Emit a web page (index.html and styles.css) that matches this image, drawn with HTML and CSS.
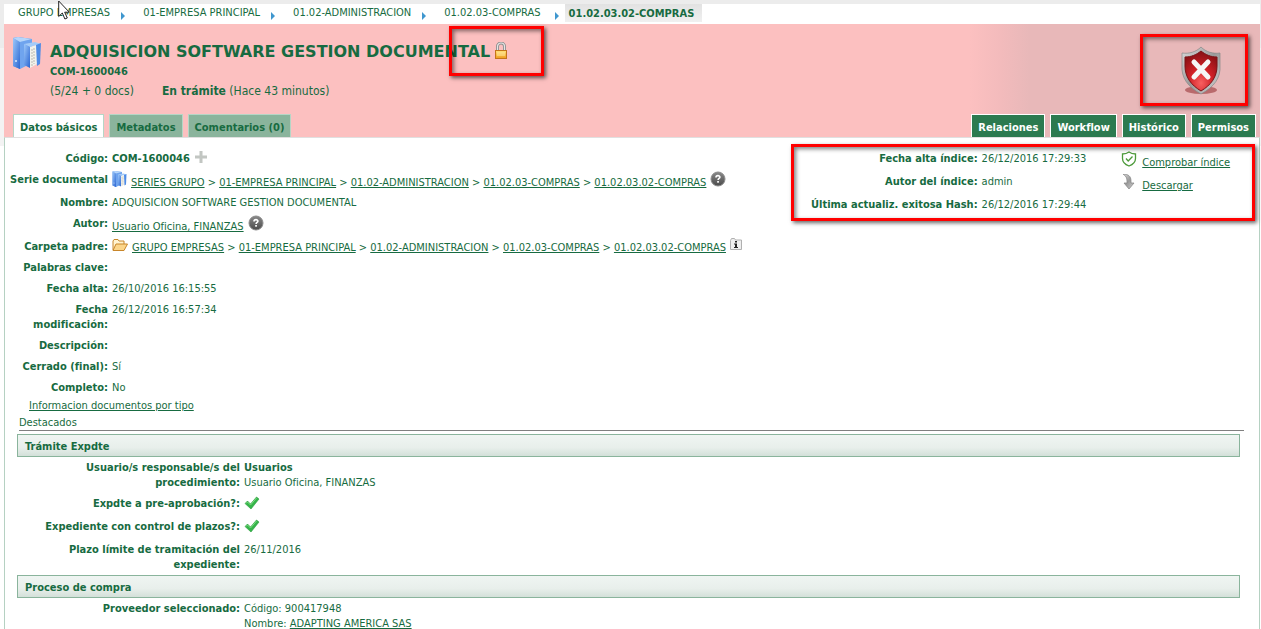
FILE: index.html
```html
<!DOCTYPE html>
<html lang="es">
<head>
    <meta charset="UTF-8">
    <meta name="viewport" content="width=device-width, initial-scale=1.0">
    <title>COM-1600046 - Adquisicion software gestion documental</title>
    <link rel="stylesheet" href="styles.css">
</head>
<body>

    <!-- Shared icons -->
    <svg class="icon-defs" width="0" height="0" aria-hidden="true">
        <defs>
            <linearGradient id="blue" x1="0" y1="0" x2="1" y2="1">
                <stop offset="0" stop-color="#9cc8fa"/>
                <stop offset="1" stop-color="#2b66d2"/>
            </linearGradient>
            <linearGradient id="gold" x1="0" y1="0" x2="0" y2="1">
                <stop offset="0" stop-color="#ffe27a"/>
                <stop offset="1" stop-color="#f09a1c"/>
            </linearGradient>
            <linearGradient id="grey" x1="0" y1="0" x2="0" y2="1">
                <stop offset="0" stop-color="#8a8a8a"/>
                <stop offset="1" stop-color="#4a4a4a"/>
            </linearGradient>
            <linearGradient id="silver" x1="0" y1="0" x2="1" y2="1">
                <stop offset="0" stop-color="#dcdcdc"/>
                <stop offset="0.5" stop-color="#9a9a9a"/>
                <stop offset="1" stop-color="#d4d4d4"/>
            </linearGradient>
            <radialGradient id="red" cx="0.5" cy="0.8" r="0.75">
                <stop offset="0" stop-color="#f86060"/>
                <stop offset="0.5" stop-color="#cf2026"/>
                <stop offset="1" stop-color="#8e1216"/>
            </radialGradient>
        </defs>
        <symbol id="binders" viewBox="0 0 28 32">
            <path d="M0 1 5 0 19 2v7L7 32 0 29z" fill="#5b93e6"/>
            <path d="M0 1 7 5v27l-7-3z" fill="url(#blue)"/>
            <path d="M7 5 19 2v24L7 32z" fill="#6fa4ee"/>
            <path d="M0 1 5 0 19 2 7 5z" fill="#b5d6fb"/>
            <path d="M11 7 22 5l6 2-11 3z" fill="#a5cbf8"/>
            <path d="M11 7l6 3v21l-6-3z" fill="url(#blue)"/>
            <path d="M17 10 24 8v19l-7 4z" fill="#f2f2ec"/>
            <path d="M19 12v17M21 11v16" stroke="#b9b9b0" stroke-dasharray="2 1" fill="none"/>
            <path d="M23 8 28 6l-1 21-3 2z" fill="#4d8be6"/>
            <circle cx="3" cy="24" r="1" fill="#d8eaff"/>
        </symbol>
        <symbol id="help" viewBox="0 0 16 16">
            <circle cx="8" cy="8" r="7" fill="url(#grey)" stroke="#8c8c8c"/>
            <path d="M6 6.500c0-2.500 4-2.400 3.900-.2-.1 1.200-1.800 1.200-1.800 2.600" fill="none" stroke="#fff" stroke-width="1.600"/>
            <rect x="7.200" y="10" width="1.700" height="1.700" fill="#fff"/>
        </symbol>
        <symbol id="check" viewBox="0 0 16 14">
            <path d="M1 7.500 3.500 5l3 3L12.500 1l2.500 2L7 13z" fill="#35b54a" stroke="#2a9a3c" stroke-width="0.600"/>
            <path d="M2 7.500 3.500 6l3 3 6-7" fill="none" stroke="#7bdc7f"/>
        </symbol>
    </svg>

    <div class="page">
        <nav class="breadcrumb">
            <a href="#">GRUPO EMPRESAS</a>
            <a href="#">01-EMPRESA PRINCIPAL</a>
            <a href="#">01.02-ADMINISTRACION</a>
            <a href="#">01.02.03-COMPRAS</a>
            <a href="#" class="current">01.02.03.02-COMPRAS</a>
        </nav>

        <header class="header">
            <div class="header-main">
                <svg class="header-icon" width="28" height="32"><use href="#binders"/></svg>
                <div class="header-text">
                    <h1 class="title">ADQUISICION SOFTWARE GESTION DOCUMENTAL
                        <span class="lock">
                            <svg width="14" height="18" viewBox="0 0 14 18">
                                <path d="M3.500 9V4.500a3.500 3.500 0 0 1 7 0V9" fill="none" stroke="#8d8d8d" stroke-width="3"/>
                                <path d="M3.500 9V4.500a3.500 3.500 0 0 1 7 0V9" fill="none" stroke="#e6e6e6" stroke-width="1.200"/>
                                <rect x="1.500" y="8.500" width="11" height="8" fill="url(#gold)" stroke="#c4741a"/>
                                <path d="M3 11h8M3 13h8" stroke="#ffe9a0"/>
                            </svg>
                            <span class="highlight highlight-lock"></span>
                        </span>
                    </h1>
                    <div class="code">COM-1600046</div>
                    <div class="status"><span>(5/24 + 0 docs)</span><span><b>En trámite</b> (Hace 43 minutos)</span></div>
                </div>
                <div class="integrity">
                    <svg width="44" height="50" viewBox="0 0 44 50">
                        <ellipse cx="22" cy="44" rx="16" ry="4" fill="#b96a6c"/>
                        <path d="M22 1C17 6 10 8 3 7c0 3 0 6 0 12-1 13 6 22 19 29 13-7 20-16 19-29V7C34 8 27 6 22 1z" fill="url(#silver)" stroke="#868686" stroke-width="0.700"/>
                        <path d="M22 5c-5 4-10 6-16 6v9c0 11 6 19 16 25 10-6 16-14 16-25v-9c-6 0-11-2-16-6z" fill="url(#red)" stroke="#7c1216"/>
                        <path d="M15 16l14 15M29 16 15 31" stroke="#f6f6f6" stroke-width="5" stroke-linecap="round"/>
                    </svg>
                    <span class="highlight"></span>
                </div>
            </div>
            <nav class="tabs">
                <a href="#" class="tab active">Datos básicos</a>
                <a href="#" class="tab">Metadatos</a>
                <a href="#" class="tab">Comentarios (0)</a>
                <a href="#" class="tab action first-action">Relaciones</a>
                <a href="#" class="tab action">Workflow</a>
                <a href="#" class="tab action">Histórico</a>
                <a href="#" class="tab action">Permisos</a>
            </nav>
        </header>

        <main class="content">
            <div class="columns">
                <dl class="fields">
                    <div class="field">
                        <dt>Código:</dt>
                        <dd><b>COM-1600046</b>
                            <svg class="icon plus" width="12" height="12" viewBox="0 0 12 12"><path d="M6 0v12M0 6h12" stroke="#c2c6c2" stroke-width="3"/></svg>
                        </dd>
                    </div>
                    <div class="field with-icon">
                        <dt>Serie documental</dt>
                        <dd class="path">
                            <svg class="icon" width="15" height="16"><use href="#binders"/></svg>
                            <span><a href="#">SERIES GRUPO</a> &gt; <a href="#">01-EMPRESA PRINCIPAL</a> &gt; <a href="#">01.02-ADMINISTRACION</a> &gt; <a href="#">01.02.03-COMPRAS</a> &gt; <a href="#">01.02.03.02-COMPRAS</a></span>
                            <svg class="icon" width="16" height="16"><use href="#help"/></svg>
                        </dd>
                    </div>
                    <div class="field">
                        <dt>Nombre:</dt>
                        <dd>ADQUISICION SOFTWARE GESTION DOCUMENTAL</dd>
                    </div>
                    <div class="field with-icon">
                        <dt>Autor:</dt>
                        <dd class="path">
                            <span><a href="#">Usuario Oficina, FINANZAS</a></span>
                            <svg class="icon" width="16" height="16"><use href="#help"/></svg>
                        </dd>
                    </div>
                    <div class="field">
                        <dt>Carpeta padre:</dt>
                        <dd class="path folder-path">
                            <svg class="icon" width="16" height="14" viewBox="0 0 16 14">
                                <path d="M1 12V3l1-1.500h4L7 3h5v3" fill="#fff3d0" stroke="#c8862a"/>
                                <path d="M1 12.500 4 6h11.500L12 12.500z" fill="#fbd58a" stroke="#c8862a"/>
                            </svg>
                            <span><a href="#">GRUPO EMPRESAS</a> &gt; <a href="#">01-EMPRESA PRINCIPAL</a> &gt; <a href="#">01.02-ADMINISTRACION</a> &gt; <a href="#">01.02.03-COMPRAS</a> &gt; <a href="#">01.02.03.02-COMPRAS</a></span>
                            <svg class="icon" width="12" height="12" viewBox="0 0 12 12">
                                <path d="M.5 11.500v-9L1.500.5h3l1 1.500h6v9.500z" fill="#eee" stroke="#b0b0b0"/>
                                <path d="M5 3h2v1.500H5zM4 5.500h3V9h1v1H4V9h1V6.500H4z" fill="#222"/>
                            </svg>
                        </dd>
                    </div>
                    <div class="field"><dt>Palabras clave:</dt><dd></dd></div>
                    <div class="field"><dt>Fecha alta:</dt><dd>26/10/2016 16:15:55</dd></div>
                    <div class="field"><dt>Fecha modificación:</dt><dd>26/12/2016 16:57:34</dd></div>
                    <div class="field"><dt>Descripción:</dt><dd></dd></div>
                    <div class="field"><dt>Cerrado (final):</dt><dd>Sí</dd></div>
                    <div class="field"><dt>Completo:</dt><dd>No</dd></div>
                </dl>

                <aside class="index-panel">
                    <dl class="index-data">
                        <dt>Fecha alta índice:</dt><dd>26/12/2016 17:29:33</dd>
                        <dt>Autor del índice:</dt><dd>admin</dd>
                        <dt>Última actualiz. exitosa Hash:</dt><dd>26/12/2016 17:29:44</dd>
                    </dl>
                    <div class="index-actions">
                        <div class="index-action">
                            <svg width="16" height="16" viewBox="0 0 16 16" fill="none" stroke="#4c9a3a" stroke-width="1.300">
                                <path d="M8 1C6 2.500 4 3 1.500 3v4.500C1.500 11 4 13.500 8 15c4-1.500 6.500-4 6.500-7.500V3C12 3 10 2.500 8 1z"/>
                                <path d="M5 7.500 7.200 10 11.500 5.500"/>
                            </svg>
                            <a href="#">Comprobar índice</a>
                        </div>
                        <div class="index-action">
                            <svg width="16" height="16" viewBox="0 0 16 16">
                                <path d="M2 0c5 0 8 2 8 7v2h3l-5 6-5-6h3V7c0-3-1-5-4-7z" fill="url(#silver)" stroke="#808080" stroke-width="0.700"/>
                            </svg>
                            <a href="#">Descargar</a>
                        </div>
                    </div>
                    <span class="highlight"></span>
                </aside>
            </div>

            <div class="doc-types"><a href="#">Informacion documentos por tipo</a></div>
            <div class="featured">Destacados</div>

            <h2 class="section">Trámite Expdte</h2>
            <dl class="fields wide">
                <div class="field">
                    <dt>Usuario/s responsable/s del procedimiento:</dt>
                    <dd><b>Usuarios</b><br>Usuario Oficina, FINANZAS</dd>
                </div>
                <div class="field with-icon">
                    <dt>Expdte a pre-aprobación?:</dt>
                    <dd><svg class="icon" width="16" height="14"><use href="#check"/></svg></dd>
                </div>
                <div class="field with-icon">
                    <dt>Expediente con control de plazos?:</dt>
                    <dd><svg class="icon" width="16" height="14"><use href="#check"/></svg></dd>
                </div>
                <div class="field">
                    <dt>Plazo límite de tramitación del expediente:</dt>
                    <dd>26/11/2016</dd>
                </div>
            </dl>

            <h2 class="section">Proceso de compra</h2>
            <dl class="fields wide">
                <div class="field">
                    <dt>Proveedor seleccionado:</dt>
                    <dd>Código: 900417948<br>Nombre: <a href="#">ADAPTING AMERICA SAS</a></dd>
                </div>
            </dl>
        </main>
    </div>

    <svg class="pointer" width="12" height="20" viewBox="0 0 12 20">
        <path d="M.7 1v15.500L4.300 13l2.600 6 2.400-1-2.600-5.800h4.600z" fill="#fff" stroke="#222"/>
    </svg>

</body>
</html>
```
FILE: styles.css
```css
* {
    padding: 0;
    margin: 0;
    box-sizing: border-box;
}

html {
    height: 100%;
    overflow: hidden;
}

body {
    padding: 4px 1px 0 4px;
    background: linear-gradient(#ececec 48px, #f3f3f3 48px, #f3f3f3 146px, #fff 146px);
    font-family: "DejaVu Sans Condensed", "DejaVu Sans", Tahoma, sans-serif;
    font-stretch: condensed;
    font-size: 11px;
    line-height: 15px;
    color: #176b41;
}

a {
    color: inherit;
    text-underline-offset: 1px;
}

.icon-defs {
    position: absolute;
}

.page {
    background: #fff;
}

/* Breadcrumb */
.breadcrumb {
    display: flex;
    height: 20px;
    padding: 1px 0 0 14px;
}

.breadcrumb a {
    display: flex;
    text-decoration: none;
    white-space: nowrap;
}

.breadcrumb a:not(.current)::after {
    content: "";
    align-self: flex-start;
    margin: 7px 18px 0 11px;
    border: 4px solid transparent;
    border-left-color: #3f97cf;
    border-right: 0;
}

.breadcrumb a:nth-child(4)::after {
    margin-left: 14px;
    margin-right: 6px;
}

.breadcrumb .current {
    height: 18px;
    margin-top: -1px;
    padding: 2px 8px 0 4px;
    background: linear-gradient(#e2e2e2, #f0f0f0);
    font-weight: bold;
}

/* Header */
.header {
    background: linear-gradient(to left, #e8b8b9 230px, #f3bbbc 260px, #fcc0c0 290px);
}

.header-main {
    display: flex;
    height: 90px;
    padding: 10px 12px 0 9px;
}

.header-icon {
    flex: none;
    margin-top: 3px;
}

.header-text {
    flex: 1;
    margin-left: 9px;
    padding-top: 1px;
}

.title {
    display: flex;
    align-items: center;
    gap: 4px;
    height: 32px;
    font-family: "DejaVu Sans", Verdana, sans-serif;
    font-stretch: normal;
    font-size: 16px;
    white-space: nowrap;
}

.lock {
    position: relative;
    height: 18px;
    line-height: 18px;
}

.lock svg {
    display: block;
}

.code {
    margin-top: -3px;
    font-weight: bold;
}

.status {
    display: flex;
    gap: 28px;
    margin-top: 5px;
    font-size: 12px;
}

.integrity {
    position: relative;
    width: 108px;
    height: 72px;
    padding: 12px 0 0 39px;
}

/* Red frames over the page */
.highlight {
    position: absolute;
    inset: 0;
    border: 3px solid #f00;
    box-shadow: 2px 2px 4px rgba(0, 0, 0, 0.6), inset 2px 2px 4px rgba(0, 0, 0, 0.5);
    pointer-events: none;
}

.highlight-lock {
    inset: -16px -36px -16px -45px;
}

/* Tabs */
.tabs {
    display: flex;
    gap: 5px;
    padding: 0 4px 0 9px;
}

.tab {
    height: 23px;
    padding: 5px 6px 0;
    border: 1px solid #b5d6c6;
    border-bottom: 0;
    background: #8ab49c;
    font-weight: bold;
    text-decoration: none;
    white-space: nowrap;
}

.tab.active {
    background: #fff;
}

.tab.action {
    border-color: #fff;
    background: #2c7a50;
    color: #fff;
}

.tab.first-action {
    margin-left: auto;
}

/* Content */
.content {
    padding: 7px 19px 0 12px;
    border: 1px solid #b5d1c2;
    border-top-color: #e0e0e0;
    border-bottom: 0;
}

.columns {
    display: flex;
    justify-content: space-between;
    margin: 0 -16px 0 -12px;
}

.fields {
    padding-top: 3px;
}

.fields.wide {
    padding-top: 0;
}

.field {
    display: flex;
    gap: 4px;
    min-height: 21px;
    padding: 3px 0;
}

.field.with-icon {
    min-height: 23px;
}

.field dt {
    flex: none;
    width: 103px;
    font-weight: bold;
    text-align: right;
}

.wide dt {
    width: 223px;
}

.field .icon {
    vertical-align: top;
}

.field .plus {
    margin-left: 2px;
}

.path {
    display: flex;
    gap: 4px;
    height: 15px;
    white-space: nowrap;
}

.path span {
    padding-top: 3px;
}

.path .icon {
    flex: none;
    margin-top: -1px;
}

.folder-path span {
    padding-top: 1px;
}

/* Index data */
.index-panel {
    position: relative;
    display: flex;
    gap: 35px;
    height: 77px;
    width: 464px;
    margin-right: 1px;
    margin-top: -1px;
    padding: 7px 0 0 20px;
}

.index-data {
    display: grid;
    grid-template-columns: auto auto;
    grid-auto-rows: 23px;
    column-gap: 4px;
    white-space: nowrap;
}

.index-data dt {
    font-weight: bold;
    text-align: right;
}

.index-action {
    display: flex;
    gap: 5px;
    height: 23px;
    white-space: nowrap;
}

.index-action a {
    padding-top: 4px;
}

.doc-types {
    height: 17px;
    padding-left: 12px;
}

.featured {
    height: 16px;
    margin: 0 -4px 3px 2px;
    border-bottom: 1px solid #808080;
}

.section {
    height: 23px;
    padding: 4px 7px 0;
    border: 1px solid #8ab49c;
    background: linear-gradient(#eff5f2, #e8efeb 60%, #d3e0d9);
    font-size: 11px;
    line-height: 15px;
}

.pointer {
    position: absolute;
    top: 0;
    left: 58px;
}
```
